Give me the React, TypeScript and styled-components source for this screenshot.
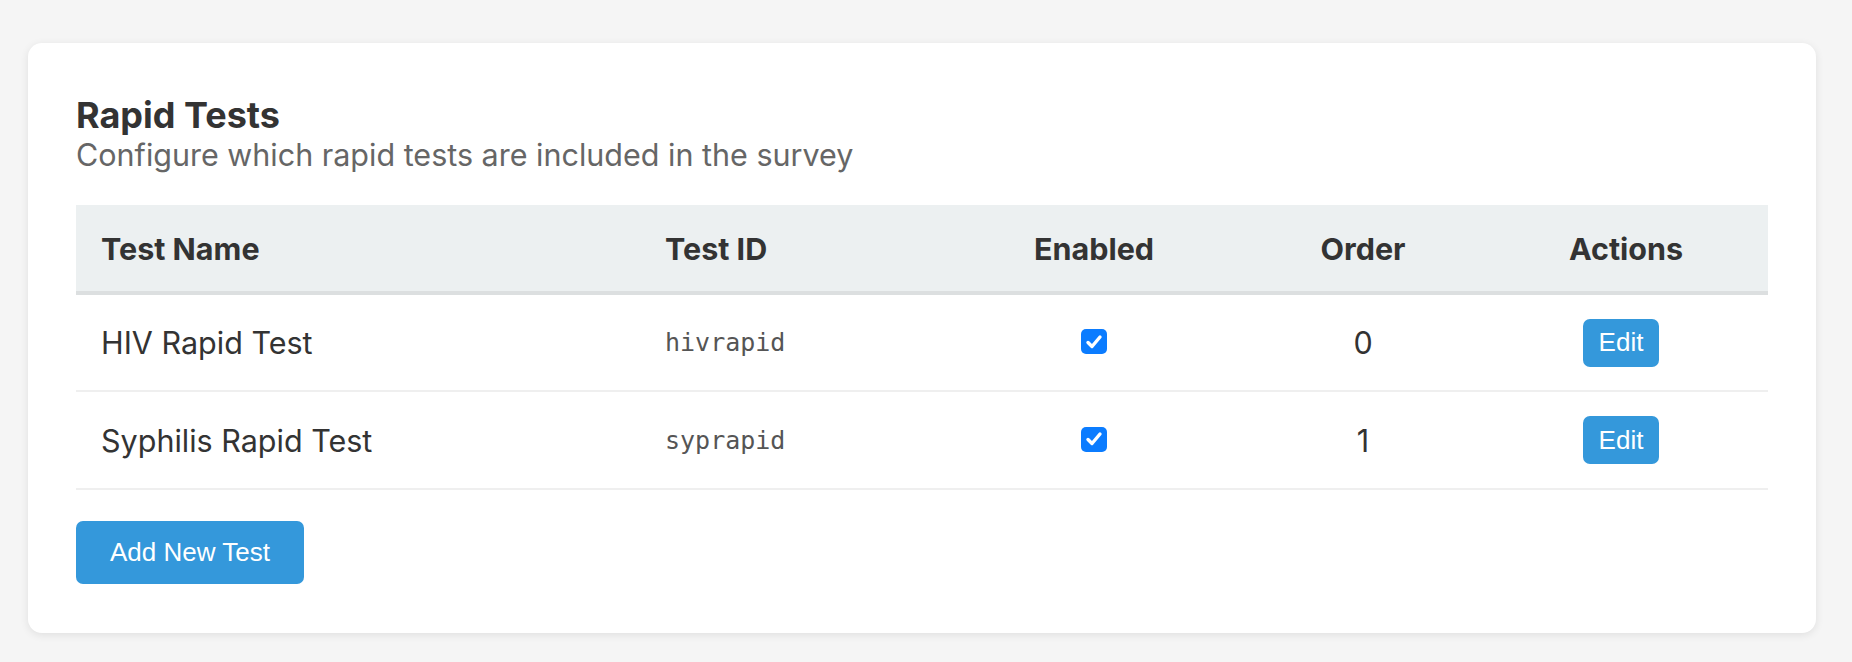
import React from 'react'
import styled, { createGlobalStyle } from 'styled-components'

const GlobalStyle = createGlobalStyle`
  * {
    box-sizing: border-box;
  }
  body {
    margin: 0;
    background: #f5f5f5;
    font-family: Inter, "Noto Sans", sans-serif;
    color: #333;
  }
`

const Page = styled.main`
  padding: 43px 36px 20px 28px;
`

const Card = styled.section`
  background: #fff;
  border-radius: 14px;
  box-shadow: 0 2px 9px rgba(0, 0, 0, 0.09);
  padding: 52px 48px 49px;
`

const Title = styled.h2`
  margin: 0 0 2px;
  font-size: 36px;
  line-height: 40px;
  font-weight: 700;
  color: #333;
`

const Subtitle = styled.p`
  margin: 0 0 32px;
  font-size: 30.5px;
  line-height: 36px;
  color: #666;
`

const Table = styled.table`
  width: 100%;
  border-collapse: collapse;
  table-layout: fixed;
`

const Col = styled.col<{ $width: number }>`
  width: ${(p) => p.$width}px;
`

const HeadCell = styled.th<{ $align?: string }>`
  height: 88px;
  padding: 0 25px;
  background: #ecf0f1;
  border-bottom: 4px solid #dcdfe0;
  text-align: ${(p) => p.$align || 'left'};
  font-size: 30.5px;
  font-weight: 700;
  color: #333;
`

const Cell = styled.td<{ $align?: string }>`
  height: 98px;
  padding: 0 25px;
  border-bottom: 2px solid #efefef;
  text-align: ${(p) => p.$align || 'left'};
  vertical-align: middle;
  font-size: 30.5px;
  color: #333;
`

const Code = styled.code`
  font-family: "DejaVu Sans Mono", "Liberation Mono", monospace;
  font-size: 25px;
  color: #555;
  vertical-align: 3px;
`

const CheckBox = styled.span`
  display: flex;
  align-items: center;
  justify-content: center;
  width: 26px;
  height: 25px;
  margin: -2px auto 0;
  border-radius: 5px;
  background: #0b7cff;
`

const Button = styled.button<{ $small?: boolean }>`
  border: none;
  cursor: pointer;
  background: #3498db;
  color: #fff;
  font-family: "Liberation Sans", Arial, sans-serif;
  font-size: 26px;
  border-radius: 7px;
  height: ${(p) => (p.$small ? '48px' : '63px')};
  padding: ${(p) => (p.$small ? '0 16px' : '0 34px')};
  margin-right: ${(p) => (p.$small ? '10px' : '0')};
`

const Footer = styled.div`
  margin-top: 31px;
`

const tests = [
  { name: 'HIV Rapid Test', id: 'hivrapid', enabled: true, order: 0 },
  { name: 'Syphilis Rapid Test', id: 'syprapid', enabled: true, order: 1 },
]

function Check() {
  return (
    <CheckBox>
      <svg width="18" height="16" viewBox="0 0 18 16">
        <path d="M3 8.5 L7 12.5 L15 3" fill="none" stroke="#fff" strokeWidth="3.4" strokeLinecap="round" strokeLinejoin="round" />
      </svg>
    </CheckBox>
  )
}

export default function App() {
  return (
    <Page>
      <GlobalStyle />
      <Card>
        <Title>Rapid Tests</Title>
        <Subtitle>Configure which rapid tests are included in the survey</Subtitle>
        <Table>
          <colgroup>
            <Col $width={564} />
            <Col $width={306} />
            <Col $width={296} />
            <Col $width={242} />
            <Col $width={284} />
          </colgroup>
          <thead>
            <tr>
              <HeadCell>Test Name</HeadCell>
              <HeadCell>Test ID</HeadCell>
              <HeadCell $align="center">Enabled</HeadCell>
              <HeadCell $align="center">Order</HeadCell>
              <HeadCell $align="center">Actions</HeadCell>
            </tr>
          </thead>
          <tbody>
            {tests.map((t) => (
              <tr key={t.id}>
                <Cell>{t.name}</Cell>
                <Cell><Code>{t.id}</Code></Cell>
                <Cell $align="center">{t.enabled && <Check />}</Cell>
                <Cell $align="center">{t.order}</Cell>
                <Cell $align="center"><Button $small>Edit</Button></Cell>
              </tr>
            ))}
          </tbody>
        </Table>
        <Footer>
          <Button>Add New Test</Button>
        </Footer>
      </Card>
    </Page>
  )
}
